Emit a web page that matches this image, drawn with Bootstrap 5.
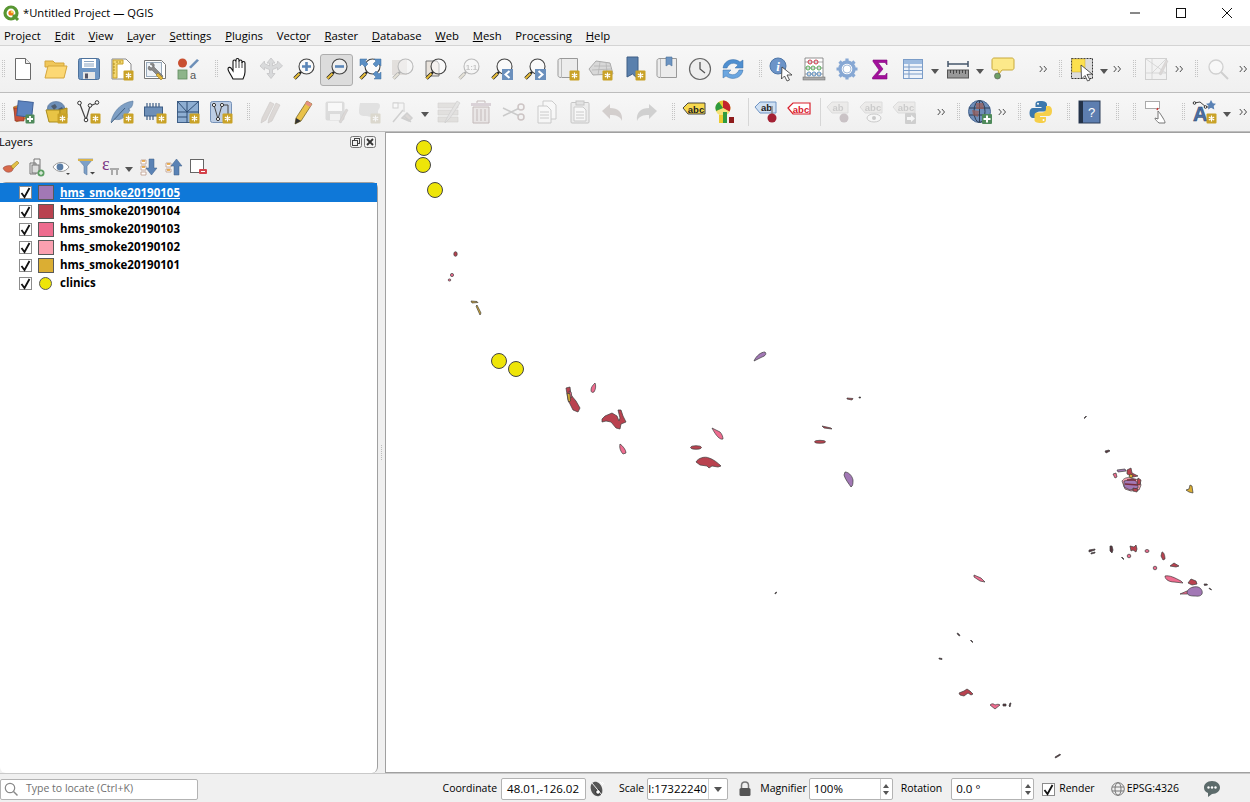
<!DOCTYPE html>
<html lang="en">
<head>
<meta charset="UTF-8">
<title>*Untitled Project — QGIS</title>
<link href="https://cdn.jsdelivr.net/npm/bootstrap@5.3.2/dist/css/bootstrap.min.css" rel="stylesheet">
<style>
html, body { height: 802px; overflow: hidden; }
body { font-family: "Open Sans", "Liberation Sans", sans-serif; font-size: 11.5px; color: #000; background: #f0f0f0; }
svg { overflow: visible; display: block; }
.app-title { height: 26px; background: #fff; font-size: 11.2px; }
.app-title .logo { width: 16px; height: 16px; margin: 0 4px 0 3px; }
.win-btn { width: 46px; height: 26px; }
.win-btn svg { width: 12px; height: 12px; }
.menu-bar { height: 20px; border-bottom: 1px solid #d4d4d4; padding-left: 4px; line-height: 19px; font-size: 11.3px; }
.menu-bar span { margin-right: 13.75px; white-space: nowrap; }
.tool-row { background: linear-gradient(#f7f7f7, #f0f0f0); border-bottom: 1px solid #bdbdbd; }
.row-a { height: 47px; }
.row-b { height: 39px; }
.tb { width: 33px; height: 100%; flex: none; display: flex; align-items: center; justify-content: center; position: relative; }
.tb svg { width: 24px; height: 24px; }
.tb.on::before { content: ""; position: absolute; left: 0; top: 8px; bottom: 6px; right: 0; background: #dcdcdc; border: 1px solid #adadad; border-radius: 3px; }
.tb.on svg { position: relative; }
.dim svg { filter: grayscale(.75) opacity(.33); }
.arr { width: 12px; flex: none; display: flex; align-items: center; justify-content: center; }
.arr::after { content: ""; border: 4px solid transparent; border-top: 5px solid #555; border-bottom: 0; margin-top: 4px; }
.w13 { width: 13px; }
.hd { width: 16px; flex: none; display: flex; align-items: center; padding-left: 9px; }
.hd::before { content: ""; width: 4px; height: 18px; background: conic-gradient(#c4c4c4 25%, transparent 0) 0 0 / 2px 2px; }
.hd0 { width: 6px; padding-left: 1px; }
.hd15 { width: 15px; }
.hd17 { width: 17px; padding-left: 10px; }
.sep { width: 6px; flex: none; display: flex; align-items: center; justify-content: flex-end; }
.sep::before { content: ""; width: 1px; height: 28px; background: #d6d6d6; }
.more { width: 13px; flex: none; display: flex; align-items: center; justify-content: flex-end; padding-right: 1px; }
.more svg { width: 9px; height: 8px; }
.more.w30 { width: 30px; }
.more.w27 { width: 27px; }
.more.w12 { width: 12px; }
.more.w15 { width: 15px; }
.more.w16 { width: 16px; }
.work { height: 641px; }
.side-panel { width: 378px; flex: none; }
.panel-head { height: 20px; padding-right: 2px; line-height: 20px; margin-left: -1px; font-size: 11.2px; }
.panel-btn { width: 12px; height: 12px; margin-left: 2px; }
.panel-tools { height: 30px; margin-left: -2px; }
.pt { width: 25px; height: 24px; flex: none; display: flex; align-items: center; justify-content: center; }
.pt svg { width: 18px; height: 18px; }
.layer-tree { height: 591px; background: #fff; border: 1px solid #a0a0a0; border-left: 0; border-bottom: 0; margin: 0; font-weight: 700; font-size: 11.5px; }
.layer-tree .list-group-item { height: 18px; padding: 0; border: 0; background: transparent; color: #000; display: flex; align-items: center; border-radius: 0; }
.layer-tree .list-group-item.active { height: 19px; background: #0f78d8; color: #fff; }
.layer-tree .list-group-item.active .lname { text-decoration: underline; }
.cb { width: 13px; height: 13px; margin-left: 19px; background: #fff; border: 1px solid #8c8c8c; flex: none; display: flex; align-items: center; justify-content: center; }
.cb svg { width: 11px; height: 11px; }
.sw { width: 16px; height: 15px; margin: 0 6px 0 6px; border: 1px solid #5a5a5a; flex: none; }
.sw-a { background: #a278b5; }
.sw-b { background: #b9424f; }
.sw-c { background: #ee6c8f; }
.sw-d { background: #fba0b0; }
.sw-e { background: #dbae33; }
.dot { background: #eee508; border-radius: 50%; width: 13px; height: 13px; margin: 0 8px 0 7px; }
.map-split { width: 7px; flex: none; display: flex; align-items: center; justify-content: center; }
.map-split::before { content: ""; width: 3px; height: 16px; background: conic-gradient(#bcbcbc 25%, transparent 0) 0 0 / 2px 2px; }
.map-view { flex: 1; background: #fff; border: 1px solid #a0a0a0; border-right: 0; }
.map-view svg { width: 865px; height: 639px; }
.status-bar { height: 29px; padding-top: 2px; border-top: 1px solid #c9c9c9; font-size: 10.5px; }
.locator { width: 198px; height: 21px; background: #fff; border: 1px solid #b3b3b3; border-radius: 2px; color: #6f6f6f; flex: none; }
.locator svg { width: 14px; height: 14px; margin: 0 8px 0 3px; }
.st-field { height: 22px; background: #fff; border: 1px solid #b3b3b3; border-radius: 2px; flex: none; display: flex; align-items: center; padding-left: 4px; overflow: hidden; white-space: nowrap; font-size: 11.5px; }
.f-coord { width: 85px; margin: 0 3px 0 4px; padding-left: 5px; }
.f-scale { width: 81px; margin: 0 9px 0 3px; padding-left: 0; }
.f-mag { width: 84px; margin: 0 8px 0 2px; }
.f-rot { width: 83px; margin: 0 8px 0 9px; }
.st-field .fill-txt { flex: 1; }
.st-spin { width: 12px; height: 100%; border-left: 1px solid #cfcfcf; display: flex; flex-direction: column; align-items: center; justify-content: center; gap: 3px; flex: none; }
.st-spin::before { content: ""; border: 3px solid transparent; border-bottom: 4px solid #555; border-top: 0; }
.st-spin::after { content: ""; border: 3px solid transparent; border-top: 4px solid #555; border-bottom: 0; }
.st-drop { width: 19px; height: 100%; border-left: 1px solid #cfcfcf; display: flex; align-items: center; justify-content: center; flex: none; }
.st-drop::after { content: ""; border: 4px solid transparent; border-top: 5px solid #555; border-bottom: 0; }
.st-ic { width: 16px; height: 16px; flex: none; }
.ic-coord { margin: 0 14px 0 0; }
.ic-lock { margin-right: 7px; }
.ic-globe { margin: 0 2px 0 16px; width: 14px; height: 14px; }
.ic-chat { margin: 0 29px 0 24px; width: 18px; height: 18px; }
.cb-render { margin: 0 4px 0 0; }
</style>
</head>
<body class="d-flex flex-column">

<svg width="0" height="0" class="position-absolute">
  <defs>
    <g id="nb"><rect x="13.5" y="13.5" width="10" height="10" rx="1" fill="#c9a227"/><path d="M18.5 15.5v6M15.8 17l5.4 3M15.8 20l5.4-3" stroke="#fff" stroke-width="1.2"/></g>
    <g id="lens"><circle cx="14.5" cy="9.5" r="7.5" fill="#fff" fill-opacity=".55" stroke="#444" stroke-width="1.1"/><path d="M9 15l-2 2" stroke="#222" stroke-width="2.4"/><path d="M7.5 16.5L2.5 21.5" stroke="#222" stroke-width="3.4"/><path d="M7.5 16.5L2.5 21.5" stroke="#e8bf3c" stroke-width="2"/></g>
    <g id="new"><path d="M4.5 1.5h10l5 5v16h-15z" fill="#fff" stroke="#6a6a6a"/><path d="M14.5 1.5v5h5" fill="#eee" stroke="#6a6a6a"/></g>
    <g id="open"><path d="M1 4h8l2 2h9v4H1z" fill="#f0c75a" stroke="#d4a63d"/><path d="M1 21l3-12h19l-3 12z" fill="#fcd874" stroke="#d4a63d"/></g>
    <g id="save"><rect x="1.5" y="1.5" width="21" height="21" rx="2" fill="#6f97c5" stroke="#4e729c"/><path d="M5 2h14v9H5z" fill="#fff"/><path d="M7 4.5h10M7 7h10M7 9h10" stroke="#8aa4c2"/><rect x="6" y="15" width="12" height="7" fill="#e6e6e6"/><rect x="8" y="16.5" width="3" height="5" fill="#556"/></g>
    <g id="saveas"><path d="M2 2h14l5 5v15H2z" fill="#fff" stroke="#888"/><path d="M3 3h10v4H7v14H3z" fill="#f4d873" stroke="#c9a227"/><path d="M3 7h2M3 10h2M3 13h2M3 16h2M7 4v2M10 4v2" stroke="#a07d10" stroke-width=".8"/><use href="#nb"/></g>
    <g id="mgr"><path d="M1.5 3.5h17l4 4v14h-21z" fill="#fff" stroke="#777"/><rect x="3.5" y="5.5" width="15" height="14" fill="#eef2f6" stroke="#9ab"/><path d="M7 7c3-2 5 0 4 3l9 9-2 3-9-9c-3 1-5-1-3-4l2 2 2-1-1-2z" fill="#888" stroke="#555" stroke-width=".5"/><path d="M15 16l5 5-2 2-5-5z" fill="#e1b63b" stroke="#8a6d10" stroke-width=".5"/></g>
    <g id="style"><circle cx="6.5" cy="6" r="4.5" fill="#c94f30"/><path d="M13 10L21 2l2 1.5-8 8z" fill="#6d8fb8"/><rect x="2" y="13" width="9" height="9" fill="#8db48a" stroke="#5f8a5c" stroke-width=".8"/><text x="14" y="22" font-family="Liberation Sans, sans-serif" font-size="11" fill="#555">a</text></g>
    <g id="hand"><path d="M7 22c-2-4-5-8-5-10 0-2 2-2 3-1l2 3V4.5c0-2 2.5-2 3 0V3c0-2 3-2 3 0v1.5c0-2 3-2 3 0V6c0-2 3-2 3 0v9c0 3-1 5-2 7z" fill="#fff" stroke="#111" stroke-width="1.1"/><path d="M10 4.5V11M13 4V11M16 5v6" stroke="#111" stroke-width=".8"/></g>
    <g id="pan"><path d="M12 1l4 5h-2.5v3l5-2.5V4l5 5-5 4v-2.5l-5 2v4H16l-4 5-4-5h2.5v-4l-5-2V13L1 9l4.5-5v2.5l5 2.5V6H8z" fill="#9aa7b5" stroke="#778"/></g>
    <g id="zin"><use href="#lens"/><path d="M14.5 5v9M10 9.5h9" stroke="#5b86b8" stroke-width="2.6"/></g>
    <g id="zout"><use href="#lens"/><path d="M10 9.5h9" stroke="#5b86b8" stroke-width="2.6"/></g>
    <g id="zfull"><use href="#lens"/><path d="M2 2h7L7 4l3 3-3 3-3-3-2 2zM23 2v7l-2-2-3 3-3-3 3-3-2-2zM23 22h-7l2-2-3-3 3-3 3 3 2-2z" fill="#5b8fc4" stroke="#3f6c9c" stroke-width=".5"/></g>
    <g id="zsel"><rect x="1" y="3" width="15" height="15" fill="#d8b090"/><use href="#lens"/></g>
    <g id="zlay"><path d="M2 4h11l2 3v12H2z" fill="#e9e3dc" stroke="#777"/><use href="#lens"/></g>
    <g id="znat"><use href="#lens"/><text x="14.5" y="12.5" text-anchor="middle" font-family="Liberation Sans, sans-serif" font-size="8" font-weight="700" fill="#666">1:1</text></g>
    <g id="zprev"><use href="#lens"/><rect x="12" y="12" width="11" height="11" fill="#6b90bd"/><path d="M19.5 14l-4 3.5 4 3.5" fill="none" stroke="#fff" stroke-width="2"/></g>
    <g id="znext"><use href="#lens"/><rect x="12" y="12" width="11" height="11" fill="#6b90bd"/><path d="M15.5 14l4 3.5-4 3.5" fill="none" stroke="#fff" stroke-width="2"/></g>
    <g id="sheet"><path d="M5 1.5h16.5v19H5c-2 0-3-1-3-2V3.5c0-1 1-2 3-2z" fill="#ececec" stroke="#999"/><path d="M5.5 2v19" stroke="#bbb"/></g>
    <g id="mapnew"><use href="#sheet"/><use href="#nb"/></g>
    <g id="map3d"><path d="M7 4l14 2 3 11-20 1-4-6z" fill="#d8d8d8" stroke="#aaa"/><path d="M5 9l16 0M3 13l19-1M11 5l-2 13M17 5l1 12" stroke="#b5b5b5" stroke-width=".8"/><use href="#nb"/></g>
    <g id="bmnew"><path d="M5 0h11v22l-5.5-5L5 20z" fill="#5a80ad" stroke="#3e5f86"/><use href="#nb"/></g>
    <g id="bmshow"><use href="#sheet"/><path d="M11 0h6v9l-3-2-3 2z" fill="#6c94c2" stroke="#4c6f99" stroke-width=".6"/></g>
    <g id="clock"><circle cx="12" cy="12" r="10.5" fill="#eee" stroke="#666" stroke-width="1.2"/><path d="M12 5v7l5 4" fill="none" stroke="#555" stroke-width="1.3"/></g>
    <g id="refresh"><path d="M2 11C3 3 13 0 19 5l3-2v8h-8l3-3c-4-3-9-2-11 3z" fill="#4f8fd0" stroke="#3a6ea6" stroke-width=".5"/><path d="M22 13c-1 8-11 11-17 6l-3 2v-8h8l-3 3c4 3 9 2 11-3z" fill="#6ba6e0" stroke="#3a6ea6" stroke-width=".5"/></g>
    <g id="ident"><circle cx="9" cy="9" r="8" fill="#6c94c8" stroke="#4f77a8"/><text x="9" y="14" text-anchor="middle" font-family="Liberation Serif, serif" font-style="italic" font-weight="700" font-size="13" fill="#fff">i</text><path d="M13 10l10 8-5 0 2.5 5-2.5 1-2.5-5-3 3z" fill="#fff" stroke="#333" stroke-width=".8"/></g>
    <g id="abacus"><path d="M3 1h18v20H3z" fill="#fff" stroke="#777" stroke-width=".8"/><rect x="1" y="20" width="22" height="3" fill="#aaa" stroke="#666" stroke-width=".5"/><path d="M3 5h18M3 11h18M3 17h18" stroke="#777" stroke-width=".6"/><g fill="none" stroke-width="1"><circle cx="8" cy="5" r="2" stroke="#c34"/><circle cx="14" cy="5" r="2" stroke="#c34"/><circle cx="6" cy="11" r="2" stroke="#5a5"/><circle cx="11" cy="11" r="2" stroke="#5a5"/><circle cx="17" cy="11" r="2" stroke="#5a5"/><circle cx="7" cy="17" r="2" stroke="#58b"/><circle cx="12" cy="17" r="2" stroke="#58b"/><circle cx="17" cy="17" r="2" stroke="#58b"/></g></g>
    <g id="gear"><circle cx="12" cy="12" r="7" fill="#fff" stroke="#87a8d4" stroke-width="3.4"/><path d="M12 1.5v4M12 18.5v4M1.5 12h4M18.5 12h4M4.5 4.5l3 3M16.5 16.5l3 3M19.5 4.5l-3 3M7.5 16.5l-3 3" stroke="#87a8d4" stroke-width="3.2"/><circle cx="12" cy="12" r="4" fill="#fff" stroke="#6b8fbf" stroke-width=".6"/></g>
    <g id="sigma"><path d="M5 3h14v5l-2-2.5H10L15 12l-5.5 6.5H17L19 16v6H4.5v-1.5L11 13 5 4.5z" fill="#a3109c" stroke="#7c0a78" stroke-width=".6"/></g>
    <g id="attr"><rect x="2.5" y="2.5" width="19" height="19" fill="#eef3fa" stroke="#7a9cc8"/><rect x="3" y="3" width="18" height="4" fill="#9dbbe0"/><path d="M3 10h18M3 13.5h18M3 17h18M8 7v14" stroke="#7a9cc8"/></g>
    <g id="ruler"><rect x="1.5" y="13" width="21" height="8" fill="#999" stroke="#555"/><path d="M4.5 13v3M7.5 13v4M10.5 13v3M13.5 13v4M16.5 13v3M19.5 13v4" stroke="#333" stroke-width=".8"/><path d="M2 7h20M2 4v6M22 4v6" stroke="#44566a" stroke-width="1.5"/></g>
    <g id="balloon"><path d="M3 1h18c1 0 2 1 2 2v8c0 1-1 2-2 2H11l-3 4-1-4H3c-1 0-2-1-2-2V3c0-1 1-2 2-2z" fill="#fce98a" stroke="#c8a93a"/><circle cx="6.5" cy="19" r="3" fill="#6e9f63" stroke="#555" stroke-width=".6"/></g>
    <g id="sel"><rect x="1.5" y="1.5" width="21" height="20" fill="#ddd" stroke="#333" stroke-dasharray="2 1"/><rect x="2" y="2" width="13" height="13" fill="#fce04e" stroke="#c8a93a" stroke-width=".5"/><path d="M11 8l11 9-5 .5 3 5.5-2.5 1-2.5-5.5-3.5 3.5z" fill="#fff" stroke="#333" stroke-width=".8"/></g>
    <g id="ed"><rect x="1.5" y="1.5" width="21" height="21" fill="#eee" stroke="#888"/><path d="M2 2l20 14M22 2L8 16M8 2v20M2 16h20" stroke="#888" stroke-width=".8"/><path d="M15 17L22 3l2 1-7 14z" fill="#c98" stroke="#777" stroke-width=".5"/></g>
    <g id="sch"><circle cx="10" cy="10" r="7" fill="#fff" stroke="#888" stroke-width="1.3"/><path d="M15 15l7 7" stroke="#888" stroke-width="2"/></g>
    <g id="dsm"><path d="M4 6l9-1 1 15-10 1z" transform="rotate(-12 8 14)" fill="#d68a35" stroke="#a15d1c" stroke-width=".6"/><path d="M3 8l9 0 1 13H4z" fill="#c9513a" stroke="#8a3322" stroke-width=".6"/><rect x="6.5" y="1.5" width="15" height="15" fill="#5d84c0" stroke="#3e5f96" transform="rotate(6 14 9)"/><rect x="14.5" y="14.5" width="9" height="9" rx="1" fill="#4f8a5b"/><path d="M19 16v6M16 19h6" stroke="#fff" stroke-width="1.8"/></g>
    <g id="gpkg"><path d="M2 10l6-7h9l6 7z" fill="#8aa5c8"/><ellipse cx="12" cy="8" rx="8.5" ry="6.5" fill="#6d8fb8" stroke="#4b6a90" stroke-width=".6"/><path d="M7 6l4-2 2 3-3 3zM14 9l4-2 1 2-3 2z" fill="#333" fill-opacity=".55"/><path d="M2 10h14v12H5z" fill="#e8c445" stroke="#a98c1f"/><path d="M16 10l7-2v10l-7 4z" fill="#cfa92e" stroke="#a98c1f"/><use href="#nb"/></g>
    <g id="vnode"><path d="M2.5 3L9 20l4-14 7-3" fill="none" stroke="#444" stroke-width="1.2"/><circle cx="2.5" cy="3" r="1.8" fill="#fff" stroke="#333"/><circle cx="9" cy="20" r="1.8" fill="#fff" stroke="#333"/><circle cx="13" cy="5.5" r="1.8" fill="#fff" stroke="#333"/><circle cx="20" cy="2.5" r="1.8" fill="#fff" stroke="#333"/><use href="#nb"/></g>
    <g id="feather"><path d="M1 22C3 12 10 3 23 1c0 6-3 8-5 8l2 1c-2 4-5 6-8 6l2 1c-3 3-7 3-10 2z" fill="#7e9fc4" stroke="#55779c" stroke-width=".6"/><path d="M1 23L15 8" stroke="#39597c" stroke-width=".9"/><use href="#nb"/></g>
    <g id="chip"><rect x="1.5" y="7" width="18" height="9" fill="#6d8fb8" stroke="#3d5d85"/><path d="M4 7V3M7 7V3M10 7V3M13 7V3M16 7V3M4 16v4M7 16v4M10 16v4" stroke="#3d5d85" stroke-width="1.2"/><use href="#nb"/></g>
    <g id="grid"><rect x="1.5" y="1.5" width="21" height="21" fill="#8eaed2" stroke="#3f5f87"/><path d="M1.5 1.5L11 12 22.5 1.5M11 1.5V22.5M1.5 12h21M1.5 17h9.5" fill="none" stroke="#2f4d73"/><use href="#nb"/></g>
    <g id="vmesh"><rect x="1.5" y="1.5" width="21" height="21" rx="2" fill="#bccde4" stroke="#7692b8"/><path d="M5 5l4 14 4-14h6v12" fill="none" stroke="#444"/><circle cx="5" cy="5" r="1.6" fill="#fff" stroke="#333"/><circle cx="9" cy="19" r="1.6" fill="#fff" stroke="#333"/><circle cx="13" cy="5" r="1.6" fill="#fff" stroke="#333"/><use href="#nb"/></g>
    <g id="pens"><path d="M4 18L12 2l4 2-8 16-5 3zM11 18L18 3l4 2-8 16-4 2z" fill="#d09a80" stroke="#8a6a58" stroke-width=".6"/></g>
    <g id="pen"><path d="M5 18L16 1l5 3L10 21l-6 3z" fill="#e9c24a" stroke="#6a5a20" stroke-width=".7"/><path d="M16 1l5 3-2 3-5-3z" fill="#e58f7f"/><path d="M4 24l1-6 5 3z" fill="#333"/></g>
    <g id="savep"><rect x="1.5" y="1.5" width="19" height="19" rx="2" fill="#aaa"/><rect x="4" y="3" width="14" height="8" fill="#fff"/><rect x="6" y="14" width="10" height="6" fill="#eee"/><path d="M15 22L22 9l2 1-7 13z" fill="#c98" stroke="#777" stroke-width=".5"/></g>
    <g id="blob"><path d="M3 3h17c3 0 4 3 2 6-2 2 0 4-2 7s-8 0-11 0-7 0-7-4 1-9 1-9z" fill="#b9b9b9"/><use href="#nb"/></g>
    <g id="toolsp"><path d="M3 3h11v9" fill="none" stroke="#888"/><rect x="3" y="3" width="5" height="5" fill="#fff" stroke="#888"/><path d="M3 22L13 10M14 16l7 6M12 18l5-5 5 5-3 3z" fill="#c98" stroke="#888" stroke-width="1.5"/></g>
    <g id="edb"><path d="M2 3h20v5H2zM2 10h20v5H2zM2 17h20v5H2z" fill="#c9b6a2" stroke="#9a8878" stroke-width=".6"/><path d="M9 22l3-6L21 1l3 2-10 15-5 5z" fill="#c8c0b8" stroke="#777" stroke-width=".6"/></g>
    <g id="trash"><path d="M2 3h20v3H2z" fill="#c28" fill-opacity=".6"/><path d="M4 7h16v16H4z" fill="#e8c5c5" stroke="#a33"/><path d="M8 9v12M12 9v12M16 9v12" stroke="#a33"/><path d="M8 3V1h8v2" fill="none" stroke="#a33"/></g>
    <g id="scis"><circle cx="19" cy="7" r="3" fill="none" stroke="#b55" stroke-width="1.5"/><circle cx="19" cy="17" r="3" fill="none" stroke="#b55" stroke-width="1.5"/><path d="M16.5 8.5L1 16M16.5 15.5L1 8" stroke="#777" stroke-width="1.5"/></g>
    <g id="copy"><path d="M8 1h9l4 4v14H8z" fill="#fff" stroke="#777"/><path d="M3 6h9l4 4v13H3z" fill="#fff" stroke="#777"/><path d="M5 12h9M5 15h9M5 18h9" stroke="#777"/></g>
    <g id="paste"><rect x="3" y="2.5" width="18" height="20.5" rx="1" fill="#ddd" stroke="#666"/><rect x="8" y="1" width="8" height="4" fill="#bbb" stroke="#666"/><path d="M6 7h9l3 3v11H6z" fill="#fff" stroke="#777"/><path d="M8 12h8M8 15h8M8 18h8" stroke="#777"/></g>
    <g id="undo"><path d="M1 11l8-7v4c8 0 13 4 12 13-2-5-6-6-12-6v4z" fill="#b57a6a"/></g>
    <g id="redo"><path d="M23 11l-8-7v4C7 8 2 12 3 21c2-5 6-6 12-6v4z" fill="#888"/></g>
    <g id="abc"><path d="M1 8l5-5h17v11H6z" fill="#f7d84d" stroke="#333" stroke-width=".9"/><text x="14" y="12.5" text-anchor="middle" font-family="Liberation Sans, sans-serif" font-size="9.5" font-weight="700" fill="#222">abc</text></g>
    <g id="pie"><circle cx="8" cy="8" r="7.5" fill="#e5c92e"/><path d="M8 8V.5a7.5 7.5 0 0 1 6.5 11z" fill="#c3242b"/><path d="M8 8l6.5 3.7A7.5 7.5 0 0 1 1 11z" fill="#f5e27a"/><path d="M8 8L1 11A7.5 7.5 0 0 1 4 2z" fill="#2d9a3e"/><rect x="8" y="12" width="4" height="11" fill="#2f9b3f"/><rect x="14" y="17" width="5" height="6" fill="#8e1b1b"/><rect x="4" y="15" width="4" height="8" fill="#eccb2f"/></g>
    <g id="abpin"><path d="M1 7l5-5h16v11H6z" fill="#cfe0f3" stroke="#6f94c4"/><text x="12.5" y="11" text-anchor="middle" font-family="Liberation Sans, sans-serif" font-size="9.5" font-weight="700" fill="#222">ab</text><path d="M18 6v9" stroke="#888" stroke-width="1.5"/><circle cx="18" cy="18" r="4.5" fill="#a32134"/></g>
    <g id="abcred"><path d="M1 8l5-5h17v11H6z" fill="#fff" stroke="#d9202d" stroke-width="1.2"/><text x="14" y="12.5" text-anchor="middle" font-family="Liberation Sans, sans-serif" font-size="9.5" font-weight="700" fill="#d9202d">abc</text></g>
    <g id="abp"><path d="M1 7l5-5h16v11H6z" fill="#e0d5c7" stroke="#aaa"/><text x="12" y="11" text-anchor="middle" font-family="Liberation Sans, sans-serif" font-size="9.5" font-weight="700" fill="#777">ab</text><circle cx="18" cy="18" r="4.5" fill="#a8507a"/></g>
    <g id="abceye"><path d="M1 7l5-5h17v11H6z" fill="#e0d5c7" stroke="#aaa"/><text x="14" y="11" text-anchor="middle" font-family="Liberation Sans, sans-serif" font-size="9.5" font-weight="700" fill="#777">abc</text><ellipse cx="15" cy="18" rx="7" ry="4" fill="#fff" stroke="#777"/><circle cx="15" cy="18" r="2" fill="#777"/></g>
    <g id="abcarr"><path d="M1 7l5-5h17v11H6z" fill="#e0d5c7" stroke="#aaa"/><text x="14" y="11" text-anchor="middle" font-family="Liberation Sans, sans-serif" font-size="9.5" font-weight="700" fill="#777">abc</text><rect x="13" y="13" width="11" height="11" rx="1" fill="#888"/><path d="M15 17h4v-2l4 3.5-4 3.5v-2h-4z" fill="#fff"/></g>
    <g id="globe"><circle cx="11.5" cy="11.5" r="11" fill="#6f8db8" stroke="#4b6a94"/><ellipse cx="11.5" cy="11.5" rx="5.5" ry="11" fill="none" stroke="#2d3e55"/><path d="M1 8h21M1 15h21M11.5 1v21" stroke="#2d3e55"/><path d="M8 3l7 0 1 6-8 0zM4 10l7 1-1 6-5-2z" fill="#9b5d55" fill-opacity=".7"/><rect x="14" y="14" width="10" height="10" rx="1" fill="#4f8a5b"/><path d="M19 15.5v7M15.5 19h7" stroke="#fff" stroke-width="2"/></g>
    <g id="py"><path d="M11.5 1C7 1 6.5 2.5 6.5 4.5V7h6v1H4C2 8 .5 9.5.5 13s1.5 5 3.5 5h2.5v-3c0-2 2-3.5 4-3.5h5c1.5 0 2.500-1 2.500-2.500V4.500C18 2.500 16 1 11.500 1z" fill="#3d78ad"/><path d="M12 23c4.500 0 5-1.500 5-3.500V17h-6v-1h8.500c2 0 3.500-1.500 3.500-5s-1.500-5-3.500-5H17v3c0 2-2 3.500-4 3.500H8c-1.500 0-2.500 1-2.500 2.500v5c0 2 2 3 6.500 3z" fill="#f6cf4a"/><circle cx="9" cy="3.800" r="1" fill="#fff"/><circle cx="14.500" cy="20" r="1" fill="#fff"/></g>
    <g id="help"><rect x="1" y="1" width="21" height="22" fill="#5d7eb0" stroke="#2e3f58"/><rect x="1" y="1" width="4" height="22" fill="#243349"/><text x="13.500" y="17" text-anchor="middle" font-family="Liberation Sans, sans-serif" font-size="13" fill="#fff">?</text></g>
    <g id="recth"><rect x="1.500" y="1.500" width="14" height="7" fill="#fff" stroke="#aaa"/><path d="M14 8l-1 2" stroke="#c33" stroke-width="1.500"/><path d="M14 11c2 2 3 4 5 7 1 2 2 3 2 5h-6c-2-2-4-3-4-5l3 1z" fill="#fff" stroke="#777"/></g>
    <g id="atext"><text x="0" y="21" font-family="Liberation Sans, sans-serif" font-size="20" font-weight="700" fill="#4b6fa5" stroke="#26405f" stroke-width=".5">A</text><path d="M1 3l6-1 6 5 5 0" fill="none" stroke="#444"/><circle cx="1.500" cy="3" r="1.300" fill="#fff" stroke="#333"/><circle cx="12.500" cy="7" r="1.300" fill="#fff" stroke="#333"/><path d="M18 0l1.800 3.300 3.200.5-2.300 2.300.6 3.300-3.300-1.600-3 1.600.6-3.300L13 3.800l3.300-.5z" fill="#5a82b5"/><use href="#nb"/></g>
    <g id="chev"><path d="M1 1l3.500 4L1 9M6.500 1L10 5l-3.500 4" fill="none" stroke="#444" stroke-width="1.300"/></g>
    <g id="tick"><path d="M1.500 6l3 4 5-9" fill="none" stroke="#111" stroke-width="1.800"/></g>
    <g id="brush"><path d="M1 10c3-3 8-3 10-1 1 2-1 5-3 5-3 1-6-1-7-4z" fill="#d86a4a" stroke="#844" stroke-width=".5"/><path d="M9 8l6-5 2 2-6 6z" fill="#e4c046" stroke="#8a6d10" stroke-width=".5"/></g>
    <g id="addg"><path d="M3 5h6v11H3zM7 1h6v13H7z" fill="#f4f4f4" stroke="#777"/><rect x="5" y="7" width="7" height="8" fill="#ddd" stroke="#777"/><circle cx="14" cy="15" r="3.500" fill="#5d9f63"/><path d="M14 13v4M12 15h4" stroke="#fff"/></g>
    <g id="eye"><path d="M1 9c4-6 12-6 16 0-4 6-12 6-16 0z" fill="#fff" stroke="#999"/><circle cx="8" cy="9" r="3.400" fill="#5a7da5"/><path d="M14 15h4l-2 2z" fill="#444"/></g>
    <g id="filt"><path d="M1 1h15l-6 7v9l-3-2V8z" fill="#7da0c8" stroke="#5a7aa0" stroke-width=".6"/><path d="M1 1h15v2H1z" fill="#d8b24a"/><path d="M13 14h5l-2.500 2.500z" fill="#444"/></g>
    <g id="eps"><text x="0" y="12" font-family="Liberation Serif, serif" font-size="18" fill="#7a3585">&#949;</text><path d="M8 10h9v2H8zM9 12h2v5H9zM14 12h2v5h-2z" fill="#aaa"/></g>
    <g id="exp"><path d="M2 2h5v4H2zM2 8h5v4H2zM2 14h5v3H2z" fill="#fff" stroke="#b98" stroke-width=".8"/><path d="M3 3h3M3 9h3" stroke="#e39a2d" stroke-width="1.500"/><path d="M10 1h5v9h3l-5.500 7L7 10h3z" fill="#5a82b5" stroke="#3e5f86" stroke-width=".5"/></g>
    <g id="col"><path d="M2 5h5v4H2zM2 11h5v3H2z" fill="#fff" stroke="#b98" stroke-width=".8"/><path d="M3 6h3M3 12h3" stroke="#e39a2d" stroke-width="1.500"/><path d="M10 17h5V8h3L12.500 1 7 8h3z" fill="#5a82b5" stroke="#3e5f86" stroke-width=".5"/></g>
    <g id="rem"><rect x="1.500" y="1.500" width="13" height="13" fill="#fff" stroke="#666"/><rect x="10" y="11" width="8" height="5" rx="1" fill="#d4414a"/><path d="M12 13.500h4" stroke="#fff"/></g>
    <g id="fl"><rect x=".5" y=".5" width="11" height="11" rx="2" fill="#f3f3f3" stroke="#777"/><rect x="4.500" y="2.500" width="5" height="5" fill="none" stroke="#444"/><rect x="2.500" y="4.500" width="5" height="5" fill="#f3f3f3" stroke="#444"/></g>
    <g id="cl"><rect x=".5" y=".5" width="11" height="11" rx="2" fill="#f3f3f3" stroke="#777"/><path d="M3 3l6 6M9 3l-6 6" stroke="#333" stroke-width="1.800"/></g>
    <g id="mag"><circle cx="6" cy="6" r="4.700" fill="none" stroke="#888" stroke-width="1.200"/><path d="M9.500 9.500l4 4" stroke="#888" stroke-width="1.500"/></g>
    <g id="cur"><path d="M5 1c3-1 7 2 8 6s0 7-3 8-7-2-8-6 0-7 3-8z" fill="#555"/><circle cx="9" cy="11" r="2.300" fill="#fff" stroke="#222"/><path d="M3 2l10 12M11 1l3 3M13 1l2 2" stroke="#fff" stroke-width=".9"/></g>
    <g id="lock"><path d="M4.500 7V4.500C4.500 2 6 1 8 1s3.500 1 3.500 3.500V7" fill="none" stroke="#777" stroke-width="1.500"/><rect x="2.500" y="7" width="11" height="8" rx="1.500" fill="#555"/></g>
    <g id="wgs"><circle cx="7" cy="7" r="6.300" fill="none" stroke="#777"/><ellipse cx="7" cy="7" rx="3" ry="6.300" fill="none" stroke="#777"/><path d="M1 5h12M1 9h12" stroke="#777"/></g>
    <g id="chat"><path d="M9 1c5 0 8 3 8 6.500S14 14 9 14l-4 3v-4C2 12 1 10 1 7.500 1 4 4 1 9 1z" fill="#5c6b6b"/><circle cx="5.500" cy="7.500" r="1.200" fill="#fff"/><circle cx="9" cy="7.500" r="1.200" fill="#fff"/><circle cx="12.500" cy="7.500" r="1.200" fill="#fff"/></g>
  </defs>
</svg>

<div class="app-title d-flex align-items-center flex-none">
  <svg class="logo" viewBox="0 0 16 16"><circle cx="8" cy="8" r="6" fill="none" stroke="#589632" stroke-width="3.200"/><path d="M10 10l5 5" stroke="#589632" stroke-width="3"/><circle cx="8" cy="8" r="2.600" fill="#ee7913"/><circle cx="9" cy="7" r="1.300" fill="#f1d75b"/></svg>
  <span>*Untitled Project — QGIS</span>
  <div class="ms-auto d-flex">
    <div class="win-btn d-flex align-items-center justify-content-center"><svg viewBox="0 0 12 12"><path d="M1 6h10" stroke="#111"/></svg></div>
    <div class="win-btn d-flex align-items-center justify-content-center"><svg viewBox="0 0 12 12"><rect x="1.500" y="1.500" width="9" height="9" fill="none" stroke="#111"/></svg></div>
    <div class="win-btn d-flex align-items-center justify-content-center"><svg viewBox="0 0 12 12"><path d="M1 1l10 10M11 1L1 11" stroke="#111"/></svg></div>
  </div>
</div>

<div class="menu-bar d-flex">
  <span>Pro<u>j</u>ect</span><span><u>E</u>dit</span><span><u>V</u>iew</span><span><u>L</u>ayer</span><span><u>S</u>ettings</span><span><u>P</u>lugins</span><span>Vect<u>o</u>r</span><span><u>R</u>aster</span><span><u>D</u>atabase</span><span><u>W</u>eb</span><span><u>M</u>esh</span><span>Pro<u>c</u>essing</span><span><u>H</u>elp</span>
</div>

<div class="tool-row row-a d-flex">
  <i class="hd hd0"></i>
  <span class="tb"><svg viewBox="0 0 24 24"><use href="#new"/></svg></span>
  <span class="tb"><svg viewBox="0 0 24 24"><use href="#open"/></svg></span>
  <span class="tb"><svg viewBox="0 0 24 24"><use href="#save"/></svg></span>
  <span class="tb"><svg viewBox="0 0 24 24"><use href="#saveas"/></svg></span>
  <span class="tb"><svg viewBox="0 0 24 24"><use href="#mgr"/></svg></span>
  <span class="tb"><svg viewBox="0 0 24 24"><use href="#style"/></svg></span>
  <i class="hd hd17"></i>
  <span class="tb"><svg viewBox="0 0 24 24"><use href="#hand"/></svg></span>
  <span class="tb dim"><svg viewBox="0 0 24 24"><use href="#pan"/></svg></span>
  <span class="tb"><svg viewBox="0 0 24 24"><use href="#zin"/></svg></span>
  <span class="tb on"><svg viewBox="0 0 24 24"><use href="#zout"/></svg></span>
  <span class="tb"><svg viewBox="0 0 24 24"><use href="#zfull"/></svg></span>
  <span class="tb dim"><svg viewBox="0 0 24 24"><use href="#zsel"/></svg></span>
  <span class="tb"><svg viewBox="0 0 24 24"><use href="#zlay"/></svg></span>
  <span class="tb dim"><svg viewBox="0 0 24 24"><use href="#znat"/></svg></span>
  <span class="tb"><svg viewBox="0 0 24 24"><use href="#zprev"/></svg></span>
  <span class="tb"><svg viewBox="0 0 24 24"><use href="#znext"/></svg></span>
  <span class="tb"><svg viewBox="0 0 24 24"><use href="#mapnew"/></svg></span>
  <span class="tb"><svg viewBox="0 0 24 24"><use href="#map3d"/></svg></span>
  <span class="tb"><svg viewBox="0 0 24 24"><use href="#bmnew"/></svg></span>
  <span class="tb"><svg viewBox="0 0 24 24"><use href="#bmshow"/></svg></span>
  <span class="tb"><svg viewBox="0 0 24 24"><use href="#clock"/></svg></span>
  <span class="tb"><svg viewBox="0 0 24 24"><use href="#refresh"/></svg></span>
  <i class="hd hd15"></i>
  <span class="tb"><svg viewBox="0 0 24 24"><use href="#ident"/></svg></span>
  <span class="tb"><svg viewBox="0 0 24 24"><use href="#abacus"/></svg></span>
  <span class="tb"><svg viewBox="0 0 24 24"><use href="#gear"/></svg></span>
  <span class="tb"><svg viewBox="0 0 24 24"><use href="#sigma"/></svg></span>
  <span class="tb"><svg viewBox="0 0 24 24"><use href="#attr"/></svg></span><i class="arr"></i>
  <span class="tb"><svg viewBox="0 0 24 24"><use href="#ruler"/></svg></span><i class="arr"></i>
  <span class="tb"><svg viewBox="0 0 24 24"><use href="#balloon"/></svg></span>
  <span class="more w30"><svg viewBox="0 0 12 10"><use href="#chev"/></svg></span>
  <i class="hd"></i>
  <span class="tb"><svg viewBox="0 0 24 24"><use href="#sel"/></svg></span><i class="arr"></i>
  <span class="more"><svg viewBox="0 0 12 10"><use href="#chev"/></svg></span>
  <i class="hd"></i>
  <span class="tb dim"><svg viewBox="0 0 24 24"><use href="#ed"/></svg></span>
  <span class="more"><svg viewBox="0 0 12 10"><use href="#chev"/></svg></span>
  <i class="hd"></i>
  <span class="tb dim"><svg viewBox="0 0 24 24"><use href="#sch"/></svg></span>
  <span class="more w15"><svg viewBox="0 0 12 10"><use href="#chev"/></svg></span>
</div>

<div class="tool-row row-b d-flex">
  <i class="hd hd0"></i>
  <span class="tb"><svg viewBox="0 0 24 24"><use href="#dsm"/></svg></span>
  <span class="tb"><svg viewBox="0 0 24 24"><use href="#gpkg"/></svg></span>
  <span class="tb"><svg viewBox="0 0 24 24"><use href="#vnode"/></svg></span>
  <span class="tb"><svg viewBox="0 0 24 24"><use href="#feather"/></svg></span>
  <span class="tb"><svg viewBox="0 0 24 24"><use href="#chip"/></svg></span>
  <span class="tb"><svg viewBox="0 0 24 24"><use href="#grid"/></svg></span>
  <span class="tb"><svg viewBox="0 0 24 24"><use href="#vmesh"/></svg></span>
  <i class="hd"></i>
  <span class="tb dim"><svg viewBox="0 0 24 24"><use href="#pens"/></svg></span>
  <span class="tb"><svg viewBox="0 0 24 24"><use href="#pen"/></svg></span>
  <span class="tb dim"><svg viewBox="0 0 24 24"><use href="#savep"/></svg></span>
  <span class="tb dim"><svg viewBox="0 0 24 24"><use href="#blob"/></svg></span>
  <span class="tb dim"><svg viewBox="0 0 24 24"><use href="#toolsp"/></svg></span><i class="arr w13"></i>
  <span class="tb dim"><svg viewBox="0 0 24 24"><use href="#edb"/></svg></span>
  <span class="tb dim"><svg viewBox="0 0 24 24"><use href="#trash"/></svg></span>
  <span class="tb dim"><svg viewBox="0 0 24 24"><use href="#scis"/></svg></span>
  <span class="tb dim"><svg viewBox="0 0 24 24"><use href="#copy"/></svg></span>
  <span class="tb dim"><svg viewBox="0 0 24 24"><use href="#paste"/></svg></span>
  <span class="tb dim"><svg viewBox="0 0 24 24"><use href="#undo"/></svg></span>
  <span class="tb dim"><svg viewBox="0 0 24 24"><use href="#redo"/></svg></span>
  <i class="hd hd15"></i>
  <span class="tb"><svg viewBox="0 0 24 24"><use href="#abc"/></svg></span>
  <span class="tb"><svg viewBox="0 0 24 24"><use href="#pie"/></svg></span>
  <i class="sep"></i>
  <span class="tb"><svg viewBox="0 0 24 24"><use href="#abpin"/></svg></span>
  <span class="tb"><svg viewBox="0 0 24 24"><use href="#abcred"/></svg></span>
  <i class="sep"></i>
  <span class="tb dim"><svg viewBox="0 0 24 24"><use href="#abp"/></svg></span>
  <span class="tb dim"><svg viewBox="0 0 24 24"><use href="#abceye"/></svg></span>
  <span class="tb dim"><svg viewBox="0 0 24 24"><use href="#abcarr"/></svg></span>
  <span class="more w27"><svg viewBox="0 0 12 10"><use href="#chev"/></svg></span>
  <i class="hd"></i>
  <span class="tb"><svg viewBox="0 0 24 24"><use href="#globe"/></svg></span>
  <span class="more w12"><svg viewBox="0 0 12 10"><use href="#chev"/></svg></span>
  <i class="hd"></i>
  <span class="tb"><svg viewBox="0 0 24 24"><use href="#py"/></svg></span>
  <i class="hd"></i>
  <span class="tb"><svg viewBox="0 0 24 24"><use href="#help"/></svg></span>
  <i class="hd"></i>
  <i class="hd hd17"></i>
  <span class="tb"><svg viewBox="0 0 24 24"><use href="#recth"/></svg></span>
  <i class="hd"></i>
  <span class="tb"><svg viewBox="0 0 24 24"><use href="#atext"/></svg></span><i class="arr"></i>
  <span class="more w16"><svg viewBox="0 0 12 10"><use href="#chev"/></svg></span>
</div>

<div class="work d-flex">
  <div class="side-panel">
    <div class="panel-head d-flex align-items-center">
      <span>Layers</span>
      <svg class="panel-btn ms-auto" viewBox="0 0 12 12"><use href="#fl"/></svg>
      <svg class="panel-btn" viewBox="0 0 12 12"><use href="#cl"/></svg>
    </div>
    <div class="panel-tools d-flex align-items-center">
      <span class="pt"><svg viewBox="0 0 18 18"><use href="#brush"/></svg></span>
      <span class="pt"><svg viewBox="0 0 18 18"><use href="#addg"/></svg></span>
      <span class="pt"><svg viewBox="0 0 18 18"><use href="#eye"/></svg></span>
      <span class="pt"><svg viewBox="0 0 18 18"><use href="#filt"/></svg></span>
      <span class="pt"><svg viewBox="0 0 18 18"><use href="#eps"/></svg></span><i class="arr"></i>
      <span class="pt"><svg viewBox="0 0 18 18"><use href="#exp"/></svg></span>
      <span class="pt"><svg viewBox="0 0 18 18"><use href="#col"/></svg></span>
      <span class="pt"><svg viewBox="0 0 18 18"><use href="#rem"/></svg></span>
    </div>
    <ul class="list-group layer-tree">
      <li class="list-group-item active"><span class="cb"><svg viewBox="0 0 11 11"><use href="#tick"/></svg></span><span class="sw sw-a"></span><span class="lname">hms_smoke20190105</span></li>
      <li class="list-group-item"><span class="cb"><svg viewBox="0 0 11 11"><use href="#tick"/></svg></span><span class="sw sw-b"></span><span class="lname">hms_smoke20190104</span></li>
      <li class="list-group-item"><span class="cb"><svg viewBox="0 0 11 11"><use href="#tick"/></svg></span><span class="sw sw-c"></span><span class="lname">hms_smoke20190103</span></li>
      <li class="list-group-item"><span class="cb"><svg viewBox="0 0 11 11"><use href="#tick"/></svg></span><span class="sw sw-d"></span><span class="lname">hms_smoke20190102</span></li>
      <li class="list-group-item"><span class="cb"><svg viewBox="0 0 11 11"><use href="#tick"/></svg></span><span class="sw sw-e"></span><span class="lname">hms_smoke20190101</span></li>
      <li class="list-group-item"><span class="cb"><svg viewBox="0 0 11 11"><use href="#tick"/></svg></span><span class="sw dot"></span><span class="lname">clinics</span></li>
    </ul>
  </div>
  <div class="map-split"></div>
  <div class="map-view">
    <svg viewBox="386 133 865 639">
      <g stroke="#3d3d3d" stroke-width=".7" stroke-linejoin="round">
        <g fill="#eee508" stroke="#444" stroke-width="1">
          <circle cx="424" cy="148" r="7.500"/><circle cx="423" cy="165" r="7.500"/><circle cx="435" cy="190" r="7.500"/><circle cx="499" cy="361" r="7.500"/><circle cx="516" cy="369" r="7.500"/>
        </g>
        <g fill="#b9424f">
          <ellipse cx="455.500" cy="254" rx="1.700" ry="2.300"/>
          <path d="M566 388l4-1 1 8 5 6 4 7-2 4-5-2-5-10z"/>
          <path d="M602 419l3-3 7-3 5 3 2 5 1-3-2-8 3 0 2 6 3 6-5 2-1 5-4-1-5-6-5-1-4 1z"/>
          <ellipse cx="696" cy="447.500" rx="5.500" ry="1.800"/>
          <path d="M696 462c2-4 9-6 13-4 4 1 9 5 12 8l-3 1-6-1-3 2-2-2-7-1z"/>
          <ellipse cx="820" cy="441.800" rx="5.500" ry="1.500"/>
          <path d="M822 426l9 2 1 1-8-1z"/>
          <path d="M1162 552c2 0 3 4 3 7l-2 1-2-4zM1174 563l5 3-3 1-6-1zM1188 583l3-4 5 2 1 3-5 1z"/>
          <path d="M847 398l6 .5-1 1.500-5-1z"/>
          <path d="M959 693l5-2 3-2 3 2 3 3-2 1-3-2-4 3-4-1z"/>
          <path d="M1130 546l4 1 2-2 1 4-1 3-3-2-2 1z"/>
        </g>
        <g fill="#ee6c8f">
          <path d="M595 383c1 2 1 6-1 9-2 1-3 0-3-2 0-3 2-5 4-7z"/>
          <path d="M620 444c3 2 6 6 6 9l-3 1c-2-2-4-6-3-10z"/>
          <path d="M712 428l8 4c2 2 3 5 3 7-3 1-7-3-11-11z"/>
          <path d="M974 575l7 3 4 4-5-1-6-4z"/>
          <path d="M1165 576c5-1 10 2 16 5l2 2-9-1c-4 0-9-2-9-6z"/>
          <path d="M1180 594l7-3 4 1-4 2z"/>
          <path d="M990 705c2-2 4-1 5 0 2-1 4-1 5 0l-5 4z"/>
          <ellipse cx="1147" cy="551" rx="2" ry="1.500"/>
          <ellipse cx="1155" cy="568" rx="1.800" ry="1.800"/>
          <ellipse cx="1129" cy="556" rx="1.800" ry="1.800"/>
          <ellipse cx="452" cy="275" rx="1.600" ry="1.600"/><ellipse cx="449.500" cy="280" rx="1.300" ry="1.100"/>
          <path d="M569 391l2 1 1 5-2 1z"/>
        </g>
        <g fill="#a278b5">
          <path d="M754 361c2-5 7-9 11-9 2 2 0 4-3 5-3 1-5 3-8 4z"/>
          <path d="M845 472c3 0 7 3 8 8 0 3 0 6-2 7-2-3-6-8-7-12z"/>
          <path d="M1187 592c1-4 7-6 11-5 3 1 5 4 4 7-2 3-5 2-8 2-4 0-7-1-7-4z"/>
          <path d="M1117 470l8-1 1 2-8 1z"/>
        </g>
        <g fill="#dbae33">
          <path d="M471 301l6 .5 1 1-6 .5z"/>
          <path d="M476 306l1-1 4 8-1 2z"/>
          <path d="M567 393l3 1 .5 7-2 1z"/>
          <path d="M1186 490l3-1 1-4 2 1 1 7-4-1z"/>
        </g>
        <!-- cluster near the right edge -->
        <path d="M1122 481c2-3 5-4 9-3l8 2 2 5-2 5-8 1-6-2z" fill="#fba0b0"/>
        <path d="M1124 481l9-2 5 4v5l-8 2-6-3z" fill="#a278b5"/>
        <path d="M1127 480l9 0M1125 484l13 1" stroke="#7a2c3a" stroke-width="1.300" fill="none"/>
        <path d="M1127 470l4-2 1 5 6 3-5 1-6-3z" fill="#b9424f"/>
        <path d="M1130 474l3 1-1 3-3-1z" fill="#dbae33"/>
        <path d="M1138 478l3 2-1 5-3-1zM1133 488l5 1-1 3-4-1z" fill="#b9424f"/>
        <path d="M1113 474l3-1 1 4-2 1z" fill="#ee6c8f"/>
        <g fill="#5c3640">
          <path d="M1105 451l4-1 1 1-4 2z"/>
          <path d="M1084 418l2-2 .5.500-2 2z"/>
          <path d="M1089 550l6-1v1l-6 2zM1091 553l4-1v1l-4 1z"/>
          <path d="M1110 546l2 0 1 4-1 3-2-2z"/>
          <path d="M1122 557l2 2-.5.500-2-2z"/>
          <path d="M1204 584l3 0 .5 1-3 .500z"/>
          <path d="M1209 588l2 1 .5 1-2-1z"/>
          <path d="M859 397h1.500v1H859z"/>
          <path d="M775 593l1.500-1v1l-1.500 1z"/>
          <path d="M957 633l2 1 1 2-2-1z"/>
          <path d="M971 640l2 2-.5.500-2-2z"/>
          <path d="M939 658l3 .5v1l-3-.5z"/>
          <path d="M1003 704h3v2h-3zM1009 706l1-3 1 0-1 4z"/>
          <path d="M1055 757l5-3 .5 1-5 3z"/>
        </g>
      </g>
    </svg>
  </div>
</div>

<div class="status-bar d-flex align-items-center">
  <div class="locator d-flex align-items-center"><svg viewBox="0 0 14 14"><use href="#mag"/></svg><span>Type to locate (Ctrl+K)</span></div>
  <div class="ms-auto d-flex align-items-center">
    <span>Coordinate</span>
    <div class="st-field f-coord">48.01,-126.02</div>
    <svg class="st-ic ic-coord" viewBox="0 0 16 16"><use href="#cur"/></svg>
    <span>Scale</span>
    <div class="st-field f-scale"><span class="fill-txt">l:17322240</span><span class="st-drop"></span></div>
    <svg class="st-ic ic-lock" viewBox="0 0 16 16"><use href="#lock"/></svg>
    <span>Magnifier</span>
    <div class="st-field f-mag"><span class="fill-txt">100%</span><span class="st-spin"></span></div>
    <span>Rotation</span>
    <div class="st-field f-rot"><span class="fill-txt">0.0 °</span><span class="st-spin"></span></div>
    <span class="cb cb-render ms-0"><svg viewBox="0 0 11 11"><use href="#tick"/></svg></span>
    <span>Render</span>
    <svg class="st-ic ic-globe" viewBox="0 0 14 14"><use href="#wgs"/></svg>
    <span>EPSG:4326</span>
    <svg class="st-ic ic-chat" viewBox="0 0 18 18"><use href="#chat"/></svg>
  </div>
</div>

<script src="https://cdn.jsdelivr.net/npm/bootstrap@5.3.2/dist/js/bootstrap.bundle.min.js"></script>
</body>
</html>
